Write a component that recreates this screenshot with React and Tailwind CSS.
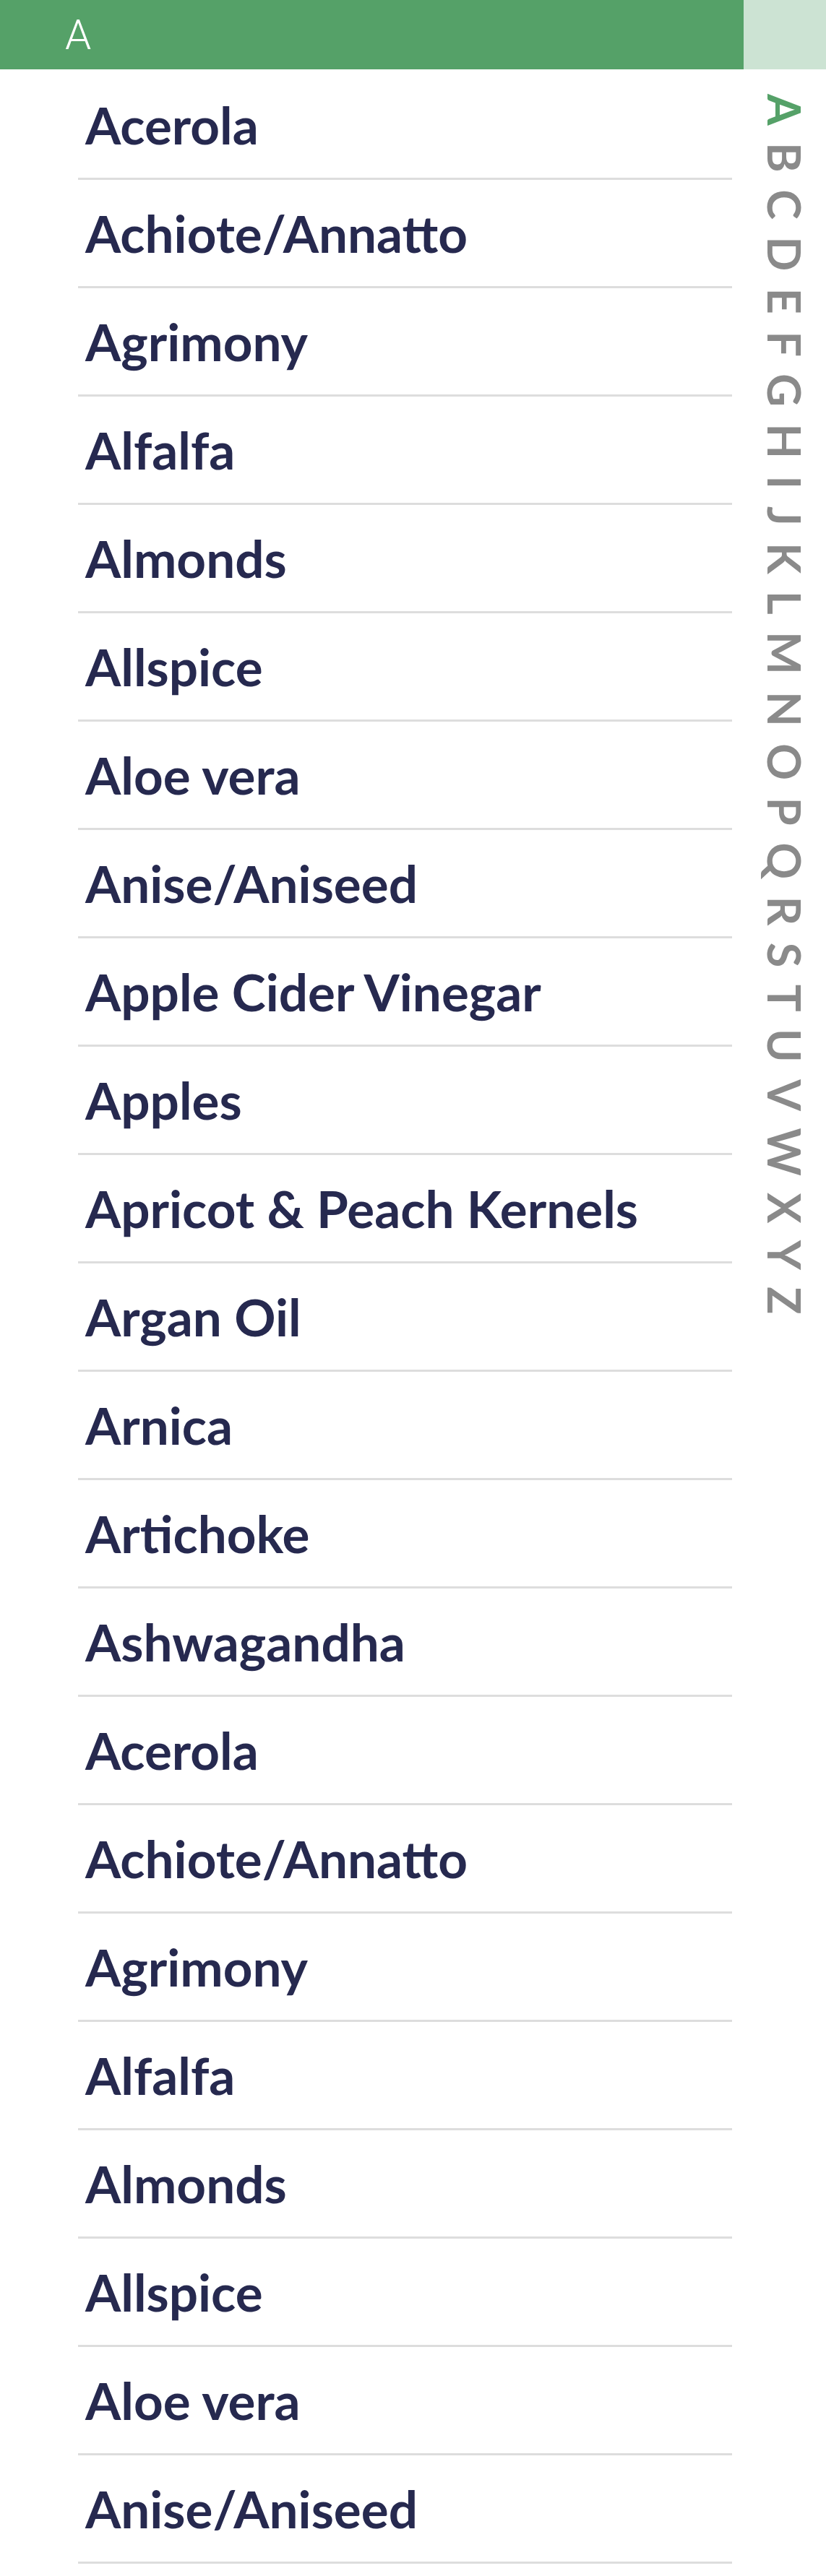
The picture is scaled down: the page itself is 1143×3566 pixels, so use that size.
const items = [
  'Acerola',
  'Achiote/Annatto',
  'Agrimony',
  'Alfalfa',
  'Almonds',
  'Allspice',
  'Aloe vera',
  'Anise/Aniseed',
  'Apple Cider Vinegar',
  'Apples',
  'Apricot & Peach Kernels',
  'Argan Oil',
  'Arnica',
  'Artichoke',
  'Ashwagandha',
  'Acerola',
  'Achiote/Annatto',
  'Agrimony',
  'Alfalfa',
  'Almonds',
  'Allspice',
  'Aloe vera',
  'Anise/Aniseed',
];

const letters = 'BCDEFGHIJKLMNOPQRSTUVWXYZ';

function Row({ children }) {
  return (
    <div className="ml-[108px] mr-[16px] h-[150px] border-b-[3px] border-[#dddddd] flex items-center pl-[10px]">
      <span className="font-['Lato',sans-serif] font-bold text-[71px] leading-none text-[#26294f] whitespace-nowrap">
        {children}
      </span>
    </div>
  );
}

export default function App() {
  return (
    <div className="flex w-[1143px] bg-white">
      <div className="w-[1029px]">
        <div className="h-[96px] bg-[#55a168] flex items-center pl-[90px]">
          <span className="font-['Roboto',sans-serif] font-light text-[58px] leading-none text-white">A</span>
        </div>
        <div className="pt-[3px]">
          {items.map((item, i) => (
            <Row key={i}>{item}</Row>
          ))}
        </div>
      </div>
      <div className="w-[114px]">
        <div className="h-[96px] bg-[#cce3d3]" />
        <div className="flex justify-center pt-[34px]">
          <div className="[writing-mode:vertical-rl] font-['Lato',sans-serif] font-bold text-[63px] leading-none tracking-[23.5px] text-[#8a8a8a]">
            <span className="text-[#55a168]">A</span>
            {letters}
          </div>
        </div>
      </div>
    </div>
  );
}
